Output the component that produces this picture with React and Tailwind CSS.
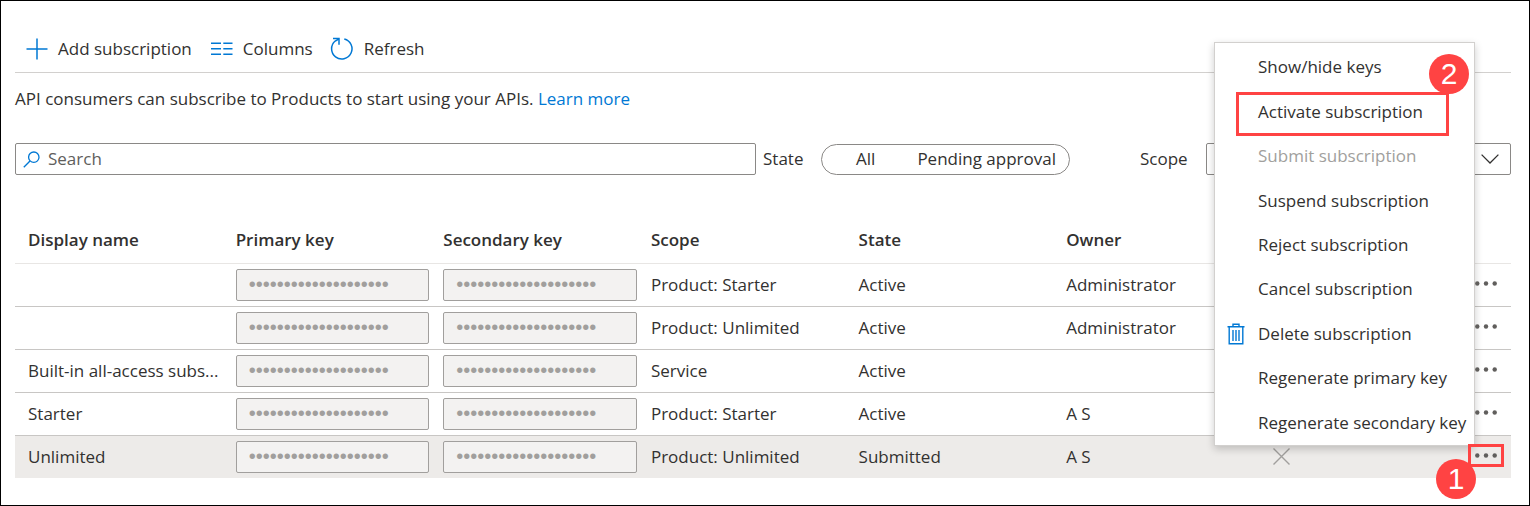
import React from "react";

const rows = [
  { name: "", scope: "Product: Starter", state: "Active", owner: "Administrator" },
  { name: "", scope: "Product: Unlimited", state: "Active", owner: "Administrator" },
  { name: "Built-in all-access subs...", scope: "Service", state: "Active", owner: "" },
  { name: "Starter", scope: "Product: Starter", state: "Active", owner: "A S" },
  { name: "Unlimited", scope: "Product: Unlimited", state: "Submitted", owner: "A S", selected: true },
];

const menuItems = [
  { label: "Show/hide keys" },
  { label: "Activate subscription", marked: true },
  { label: "Submit subscription", disabled: true },
  { label: "Suspend subscription" },
  { label: "Reject subscription" },
  { label: "Cancel subscription" },
  { label: "Delete subscription", icon: true },
  { label: "Regenerate primary key" },
  { label: "Regenerate secondary key" },
];

function PlusIcon() {
  return (
    <svg width="22" height="22" viewBox="0 0 22 22" fill="none" stroke="#0078d4" strokeWidth="1.5" aria-hidden="true">
      <path d="M11 0.5v21M0.5 11h21" />
    </svg>
  );
}

function ColumnsIcon() {
  return (
    <svg width="22" height="22" viewBox="0 0 22 22" fill="none" stroke="#0078d4" strokeWidth="1.5" aria-hidden="true">
      <path d="M0 5.2h10M12.3 5.2h9.2M0 10.8h10M12.3 10.8h9.2M0 16.3h10M12.3 16.3h9.2" />
    </svg>
  );
}

function RefreshIcon() {
  return (
    <svg width="24" height="24" viewBox="0 0 24 24" fill="none" stroke="#0078d4" strokeWidth="1.5" aria-hidden="true">
      <path d="M14.3 1.9A10.2 10.2 0 1 1 5.2 4L8.8 2" />
      <path d="M3 1.6h6v6.2" />
    </svg>
  );
}

function SearchIcon() {
  return (
    <svg width="17" height="17" viewBox="0 0 17 17" fill="none" stroke="#0078d4" strokeWidth="1.3" aria-hidden="true">
      <circle cx="10.8" cy="6.2" r="5.2" />
      <path d="M7 10L0.8 16.2" />
    </svg>
  );
}

function TrashIcon() {
  return (
    <svg width="18" height="22" viewBox="0 0 18 22" fill="none" stroke="#0078d4" strokeWidth="1.4" aria-hidden="true">
      <path d="M0.5 3.7h17M6 3.5V1.2h6v2.3M2.2 4v16.8h13.6V4M6 7v11M9 7v11M12 7v11" />
    </svg>
  );
}

function Badge({ children, className }) {
  return (
    <span
      className={
        "absolute flex h-10 w-10 items-center justify-center rounded-full bg-[#ff4343] font-['Liberation_Sans',sans-serif] text-[30px] leading-none text-white " +
        className
      }
    >
      {children}
    </span>
  );
}

function KeyField({ label }) {
  return (
    <input
      type="password"
      disabled
      aria-label={label}
      defaultValue="00000000000000000000"
      className="block h-8 w-full rounded-xs border border-[#a19f9d] bg-[#f3f2f1] px-3 font-['Liberation_Sans',sans-serif] text-[20px] text-[#a19f9d]"
    />
  );
}

function Toolbar() {
  return (
    <div className="flex h-[58px] items-center border-b border-[#d2d0ce] pt-[10px] pl-[11px]">
      <button type="button" className="flex items-center gap-[10px]">
        <PlusIcon />
        Add subscription
      </button>
      <button type="button" className="ml-[19px] flex items-center gap-[10px]">
        <ColumnsIcon />
        Columns
      </button>
      <button type="button" className="ml-[17px] flex items-center gap-[10px]">
        <RefreshIcon />
        Refresh
      </button>
    </div>
  );
}

function Filters() {
  return (
    <div className="mt-8 flex items-center">
      <label className="flex h-8 min-w-0 flex-1 items-center gap-2 rounded-xs border border-[#8a8886] pl-[7px]">
        <SearchIcon />
        <input
          type="text"
          aria-label="Search"
          placeholder="Search"
          className="min-w-0 flex-1 bg-transparent outline-none placeholder:text-[#605e5c]"
        />
      </label>
      <span id="state-label" className="ml-[7px] w-[58px]">
        State
      </span>
      <div
        role="radiogroup"
        aria-labelledby="state-label"
        className="flex h-[31px] w-[249px] items-center justify-between rounded-full border border-[#8a8886] pr-[13px] pl-[34px]"
      >
        <label>
          <input type="radio" name="state" className="sr-only" defaultChecked />
          All
        </label>
        <label>
          <input type="radio" name="state" className="sr-only" />
          Pending approval
        </label>
      </div>
      <label htmlFor="scope" className="ml-[70px] w-[66px]">
        Scope
      </label>
      <div className="grid w-[305px] items-center">
        <select
          id="scope"
          className="col-start-1 row-start-1 h-8 w-full appearance-none rounded-xs border border-[#8a8886] bg-white px-2"
        >
          <option value=""></option>
        </select>
        <svg
          className="pointer-events-none col-start-1 row-start-1 mr-3 justify-self-end"
          width="18"
          height="10"
          viewBox="0 0 18 10"
          fill="none"
          stroke="#323130"
          strokeWidth="1.3"
          aria-hidden="true"
        >
          <path d="M0.6 0.6L9 9l8.4-8.4" />
        </svg>
      </div>
    </div>
  );
}

function SubscriptionTable() {
  return (
    <table className="mt-[42px] w-full table-fixed border-collapse text-left">
      <colgroup>
        <col className="w-[13.88%]" />
        <col className="w-[13.88%]" />
        <col className="w-[13.88%]" />
        <col className="w-[13.88%]" />
        <col className="w-[13.88%]" />
        <col className="w-[13.88%]" />
        <col />
        <col className="w-16" />
      </colgroup>
      <thead>
        <tr className="h-[46px] border-b border-[#e8e6e4]">
          <th className="pl-[13px] font-semibold">Display name</th>
          <th className="pl-[13px] font-semibold">Primary key</th>
          <th className="pl-[13px] font-semibold">Secondary key</th>
          <th className="pl-[13px] font-semibold">Scope</th>
          <th className="pl-[13px] font-semibold">State</th>
          <th className="pl-[13px] font-semibold">Owner</th>
          <th aria-label="Allow tracing"></th>
          <th aria-label="Actions"></th>
        </tr>
      </thead>
      <tbody>
        {rows.map((row, i) => (
          <tr
            key={i}
            className={row.selected ? "h-[43px] bg-[#edebe9]" : "h-[43px] border-b border-[#c8c6c4]"}
          >
            <td className="pl-[13px] whitespace-nowrap">{row.name}</td>
            <td className="pr-[1px] pl-[13px]">
              <KeyField label="Primary key" />
            </td>
            <td className="pr-[1px] pl-[13px]">
              <KeyField label="Secondary key" />
            </td>
            <td className="pl-[13px] whitespace-nowrap">{row.scope}</td>
            <td className="pl-[13px]">{row.state}</td>
            <td className="pl-[13px]">{row.owner}</td>
            <td className="pl-3">
              {row.selected && (
                <svg width="17" height="17" viewBox="0 0 17 17" fill="none" stroke="#a19f9d" strokeWidth="1.4" role="img" aria-label="Tracing off">
                  <path d="M0.5 0.5l16 16M16.5 0.5l-16 16" />
                </svg>
              )}
            </td>
            <td className="pr-[7px] pb-[2px]">
              <button
                type="button"
                aria-label="More actions"
                className={
                  "relative z-20 ml-auto flex h-[23px] w-9 items-center justify-center border-[3px] " +
                  (row.selected ? "border-[#ff4343]" : "border-transparent")
                }
              >
                <svg width="22" height="5" viewBox="0 0 22 5" fill="#605e5c" className="shrink-0" aria-hidden="true">
                  <circle cx="2.3" cy="2.5" r="2.2" />
                  <circle cx="11" cy="2.5" r="2.2" />
                  <circle cx="19.7" cy="2.5" r="2.2" />
                </svg>
                {row.selected && <Badge className="top-3 -left-[35px]">1</Badge>}
              </button>
            </td>
          </tr>
        ))}
      </tbody>
    </table>
  );
}

function ContextMenu() {
  return (
    <div
      role="menu"
      className="absolute top-[41px] right-[54px] z-10 grid h-[404px] w-[261px] grid-rows-9 border border-[#d2d0ce] bg-white pt-[2px] shadow-[0_3px_8px_rgba(0,0,0,0.2)]"
    >
      {menuItems.map((item) => (
        <button
          key={item.label}
          type="button"
          role="menuitem"
          disabled={item.disabled}
          className="relative flex items-center pl-[12px] text-left whitespace-nowrap disabled:text-[#a19f9d]"
        >
          <span className="flex w-[31px] shrink-0">{item.icon && <TrashIcon />}</span>
          {item.label}
          {item.marked && (
            <>
              <span className="absolute top-[3px] right-[25px] -bottom-[2px] left-[21px] border-[3px] border-[#ff4343]" />
              <Badge className="-top-[35px] right-[5px]">2</Badge>
            </>
          )}
        </button>
      ))}
    </div>
  );
}

export default function App() {
  return (
    <main className="relative min-h-screen border border-black bg-white pt-[14px] pr-[18px] pb-6 pl-[14px] font-['Open_Sans','Noto_Sans',sans-serif] text-[17px] leading-6 text-[#323130]">
      <Toolbar />
      <p className="mt-[14px]">
        API consumers can subscribe to Products to start using your APIs.{" "}
        <a href="#" className="text-[#0078d4]">
          Learn more
        </a>
      </p>
      <Filters />
      <SubscriptionTable />
      <ContextMenu />
    </main>
  );
}
